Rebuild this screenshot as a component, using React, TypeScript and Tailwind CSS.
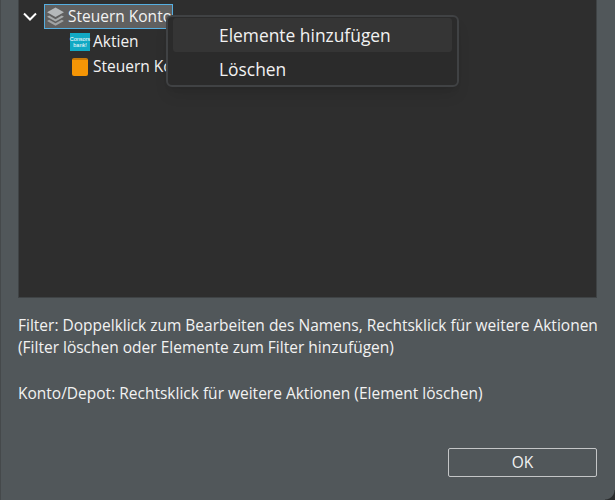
export default function App() {
  return (
    <div className="relative w-[615px] h-[500px] overflow-hidden bg-[#51575a] text-[#f2f2f2] pl-[18px] pr-[18px] font-['Open_Sans','Noto_Sans',sans-serif] text-[15.5px] border-l border-[#45494b]">
      <div className="relative h-[298px] -ml-[1px] bg-[#2e2e2e] border-b border-l border-r border-[#3f4345] pl-[3px] pt-[4px]">
        <div className="flex items-center h-[25px]">
          <svg width="16" height="12" viewBox="0 0 16 12" className="mr-[6px]" fill="none" stroke="#fff" strokeWidth="2"><path d="M2 2.5 L8 8.5 L14 2.5" /></svg>
          <div className="flex items-center w-[129px] h-[25px] bg-[#606060] border border-[#55aee0] overflow-hidden whitespace-nowrap pl-[1px]">
            <svg width="19" height="19" viewBox="0 0 18 18" className="mr-[3px] shrink-0" fill="#b4b8ba"><path d="M9 0.5 L17 5 L9 9.5 L1 5 Z" /><path d="M3 8 L9 11.5 L15 8 L17 9.2 L9 13.7 L1 9.2 Z" opacity="0.85" /><path d="M3 12 L9 15.5 L15 12 L17 13.2 L9 17.7 L1 13.2 Z" opacity="0.75" /></svg>
            <span>Steuern Konto</span>
          </div>
        </div>
        <div className="flex items-center h-[24px] mt-[1px] ml-[48px]">
          <div className="w-[20px] h-[18px] bg-[#12a9c4] mr-[3px] flex items-center justify-center text-[5.5px] leading-[6px] text-white text-center font-['Liberation_Sans',sans-serif]">Consors<br />bank!</div>
          <span>Aktien</span>
        </div>
        <div className="flex items-center h-[25px] ml-[50px] whitespace-nowrap">
          <div className="w-[16px] h-[18px] bg-[#f59505] border-t-2 border-[#c97a08] rounded-[2px] mr-[5px]" />
          <span>Steuern Konto</span>
        </div>
        <div className="absolute left-[147px] top-[15px] w-[293px] h-[72px] bg-[#2b2b2b] border-2 border-[#404244] rounded-[6px] px-[5px] pt-[1px] shadow-lg text-[17.4px]">
          <div className="h-[34px] bg-[#353535] rounded-[3px] pl-[46px] flex items-center">Elemente hinzufügen</div>
          <div className="h-[34px] pl-[46px] flex items-center">Löschen</div>
        </div>
      </div>
      <div className="mt-[16px] -ml-[1px] leading-[22px] whitespace-nowrap">
        <p>Filter: Doppelklick zum Bearbeiten des Namens, Rechtsklick für weitere Aktionen</p>
        <p>(Filter löschen oder Elemente zum Filter hinzufügen)</p>
        <p className="mt-[24px]">Konto/Depot: Rechtsklick für weitere Aktionen (Element löschen)</p>
      </div>
      <button className="absolute left-[447px] top-[448px] w-[149px] h-[29px] border border-[#c4c6c7] rounded-[2px] flex items-center justify-center text-[15.5px]">OK</button>
      <div className="absolute right-0 bottom-0 w-[10px] h-[10px] bg-[radial-gradient(circle_at_top_left,transparent_9px,#2a2c2d_10px)]" />
    </div>
  );
}
